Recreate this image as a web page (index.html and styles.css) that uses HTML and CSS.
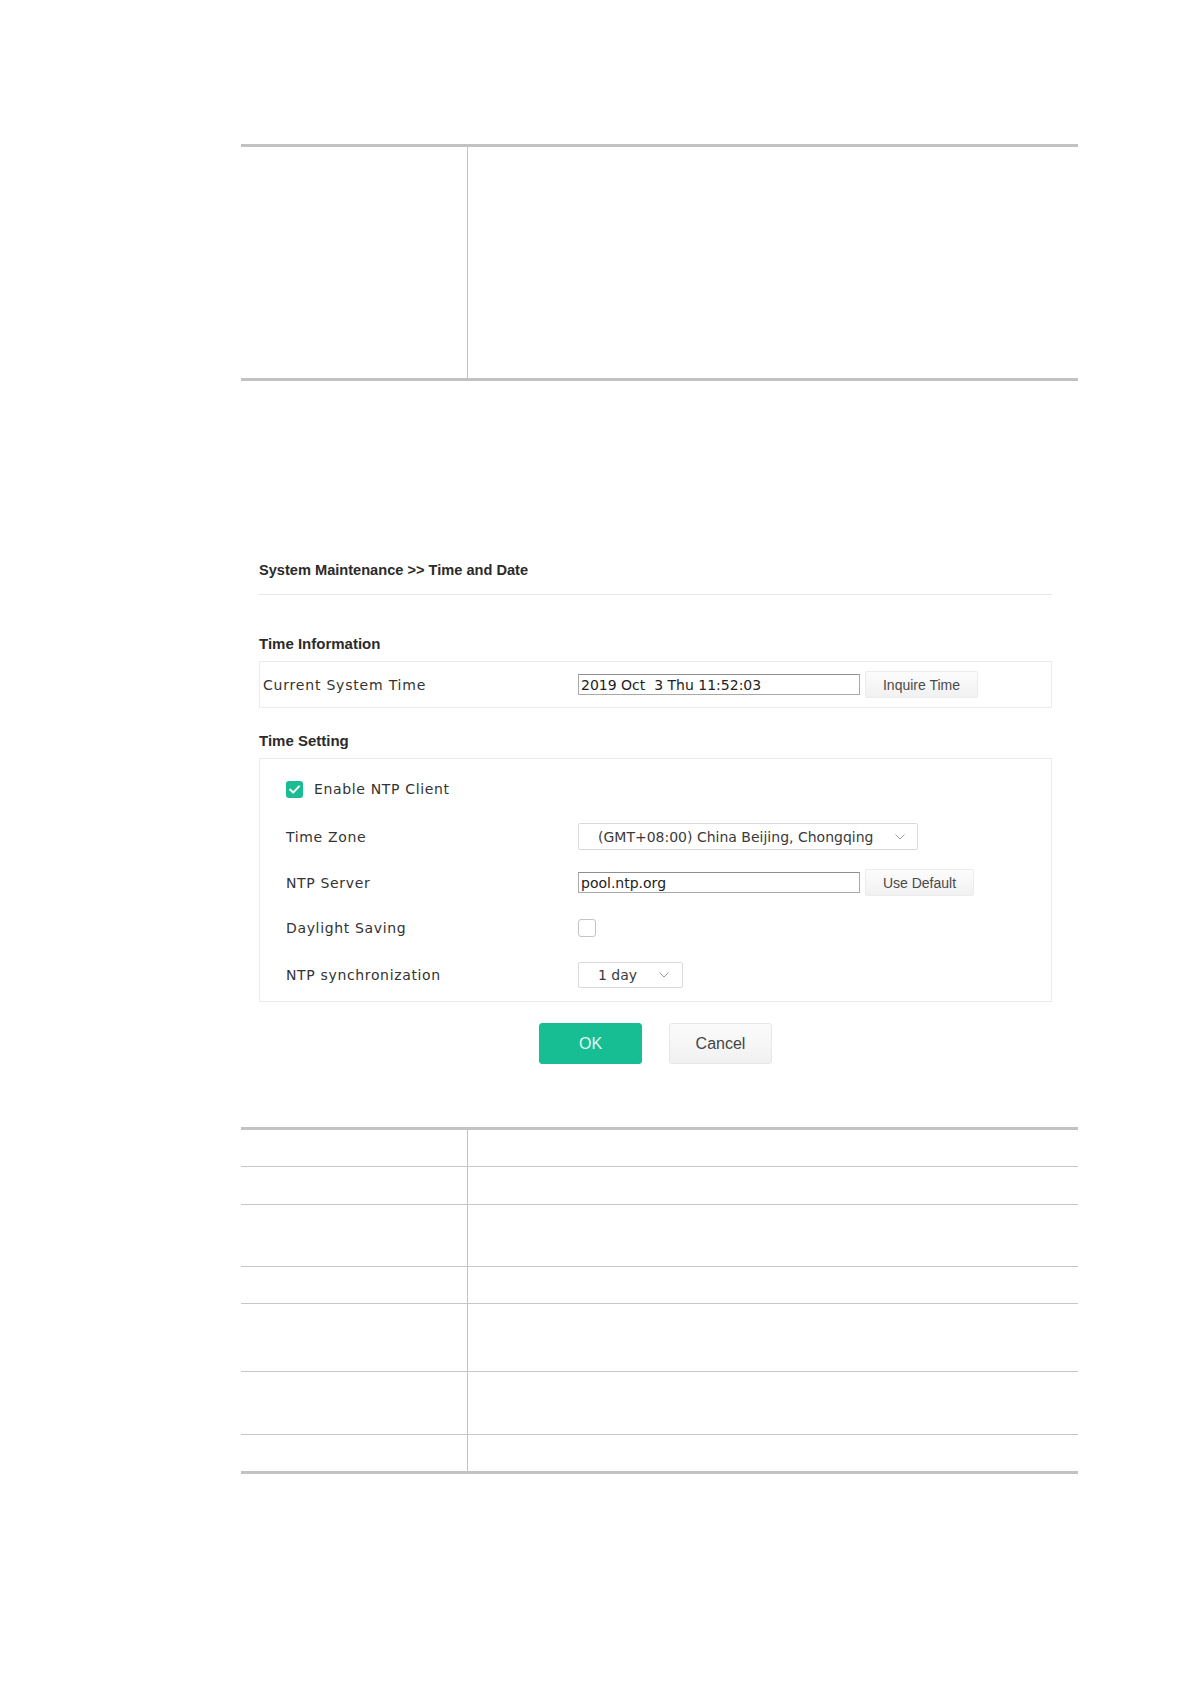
FILE: index.html
```html
<!DOCTYPE html>
<html lang="en">
<head>
<meta charset="utf-8">
<title>Time and Date</title>
<link rel="stylesheet" href="styles.css">
</head>
<body>
<div class="page">
  <div class="doc-table">
    <div class="doc-row h-top"><div class="c1"></div><div class="c2"></div></div>
  </div>

  <div class="panel">
    <div class="crumb">System Maintenance &gt;&gt; Time and Date</div>

    <div class="sec-title first">Time Information</div>
    <div class="box box-info">
      <span class="lbl lbl-info">Current System Time</span>
      <input class="txt" type="text" value="2019 Oct  3 Thu 11:52:03">
      <button class="btn-sm btn-inquire" type="button">Inquire Time</button>
    </div>

    <div class="sec-title">Time Setting</div>
    <div class="box box-set">
      <div class="set-row r1">
        <span class="chk on"><svg viewBox="0 0 17 17" width="17" height="17"><path d="M4 8.6 L7.2 11.6 L13 5.4" fill="none" stroke="#fff" stroke-width="2" stroke-linecap="round" stroke-linejoin="round"/></svg></span>
        <span class="lbl">Enable NTP Client</span>
      </div>
      <div class="set-row r2">
        <span class="lbl lbl-set">Time Zone</span>
        <div class="sel sel-tz"><span>(GMT+08:00) China Beijing, Chongqing</span><svg class="chev" viewBox="0 0 10 6" width="10" height="6"><polyline points="0.5,0.5 5,5 9.5,0.5" fill="none" stroke="#9a9a9a" stroke-width="1"/></svg></div>
      </div>
      <div class="set-row r3">
        <span class="lbl lbl-set">NTP Server</span>
        <input class="txt" type="text" value="pool.ntp.org">
        <button class="btn-sm btn-default" type="button">Use Default</button>
      </div>
      <div class="set-row r4">
        <span class="lbl lbl-set">Daylight Saving</span>
        <span class="chk off"></span>
      </div>
      <div class="set-row r5">
        <span class="lbl lbl-set">NTP synchronization</span>
        <div class="sel sel-day"><span>1 day</span><svg class="chev" viewBox="0 0 10 6" width="10" height="6"><polyline points="0.5,0.5 5,5 9.5,0.5" fill="none" stroke="#9a9a9a" stroke-width="1"/></svg></div>
      </div>
    </div>

    <div class="actions">
      <button class="btn btn-ok" type="button">OK</button>
      <button class="btn btn-cancel" type="button">Cancel</button>
    </div>
  </div>

  <div class="doc-table bottom">
    <div class="doc-row h36"><div class="c1"></div><div class="c2"></div></div>
    <div class="doc-row h38"><div class="c1"></div><div class="c2"></div></div>
    <div class="doc-row h62"><div class="c1"></div><div class="c2"></div></div>
    <div class="doc-row h37"><div class="c1"></div><div class="c2"></div></div>
    <div class="doc-row h68"><div class="c1"></div><div class="c2"></div></div>
    <div class="doc-row h63"><div class="c1"></div><div class="c2"></div></div>
    <div class="doc-row h37"><div class="c1"></div><div class="c2"></div></div>
  </div>
</div>
</body>
</html>
```

FILE: styles.css
```css
* { box-sizing: border-box; }

html, body {
  margin: 0;
  background: #ffffff;
}

body {
  font-family: "Liberation Sans", Arial, sans-serif;
  color: #333;
}

.page {
  width: 1190px;
  padding: 144px 0 40px 241px;
}

/* document tables */
.doc-table {
  width: 837px;
  border-top: 3px solid #c2c2c2;
  border-bottom: 3px solid #c2c2c2;
}

.doc-table.bottom {
  margin-top: 63px;
}

.doc-row {
  display: grid;
  grid-template-columns: 226px 1fr;
  border-top: 1px solid #c6c6c6;
}

.doc-row:first-child { border-top: 0; }

.doc-row .c2 { border-left: 1px solid #c2c2c2; }

.h-top { height: 231px; }
.h36 { height: 36px; }
.h37 { height: 37px; }
.h38 { height: 38px; }
.h62 { height: 62px; }
.h63 { height: 63px; }
.h68 { height: 68px; }

/* UI panel */
.panel {
  width: 793px;
  margin: 181px 0 0 18px;
}

.crumb {
  font-weight: bold;
  font-size: 14.6px;
  line-height: 17px;
  color: #2b2b2b;
  padding-bottom: 15px;
  border-bottom: 1px solid #e6e6e6;
}

.sec-title {
  font-weight: bold;
  font-size: 15px;
  line-height: 17px;
  color: #2b2b2b;
  margin-top: 24px;
  margin-bottom: 9px;
}

.sec-title.first { margin-top: 40px; }

.box {
  border: 1px solid #ebebeb;
  background: #fff;
}

.lbl {
  font-family: "DejaVu Sans", Verdana, sans-serif;
  font-size: 14px;
  letter-spacing: 0.65px;
  color: #333;
  white-space: nowrap;
}

.box-info {
  height: 47px;
  display: flex;
  align-items: center;
  padding-left: 3px;
}

.lbl-info { width: 315px; flex: none; letter-spacing: 0.8px; }
.lbl-set { width: 292px; flex: none; }

.txt {
  width: 282px;
  height: 21px;
  margin: 0;
  padding: 0 2px;
  border: 1px solid #a9a9a9;
  border-top-color: #8f8f8f;
  border-radius: 0;
  font-family: "DejaVu Sans", Verdana, sans-serif;
  font-size: 14px;
  color: #222;
  background: #fff;
  outline: none;
}

.btn-sm {
  height: 27px;
  margin: 0 0 0 5px;
  padding: 0;
  border: 1px solid #ececec;
  border-radius: 2px;
  background: linear-gradient(#fcfcfc, #f1f1f1);
  font-family: "Liberation Sans", Arial, sans-serif;
  font-size: 14px;
  color: #4a4a4a;
}

.btn-inquire { width: 113px; }
.btn-default { width: 109px; }

.box-set {
  height: 244px;
  padding: 7px 0 0 26px;
}

.set-row {
  display: flex;
  align-items: center;
  height: 46px;
}

.set-row.r2 { height: 49px; }
.set-row.r3 { height: 43px; }
.set-row.r4 { height: 48px; }

.chk {
  width: 17px;
  height: 17px;
  flex: none;
  border-radius: 3px;
  display: block;
}

.chk svg { display: block; }

.chk.on {
  background: #19bc93;
  margin-right: 11px;
}

.chk.off {
  width: 18px;
  height: 18px;
  border: 1px solid #c4c4c4;
  background: #fff;
}

.sel {
  display: flex;
  align-items: center;
  justify-content: space-between;
  height: 27px;
  border: 1px solid #dadada;
  border-radius: 2px;
  padding-left: 19px;
  font-family: "DejaVu Sans", Verdana, sans-serif;
  font-size: 14px;
  color: #3a3a3a;
  white-space: nowrap;
}

.sel-tz { width: 340px; padding-right: 12px; }
.sel-day { width: 105px; padding-right: 13px; height: 26px; }

.chev { display: block; }

.actions {
  display: flex;
  justify-content: center;
  gap: 27px;
  margin-top: 21px;
}

.btn {
  width: 103px;
  height: 41px;
  margin: 0;
  padding: 0;
  border-radius: 3px;
  font-family: "Liberation Sans", Arial, sans-serif;
  font-size: 16px;
}

.btn-ok {
  background: #17bd93;
  border: 1px solid #17bd93;
  color: #e4fbf4;
}

.btn-cancel {
  background: linear-gradient(#fbfbfb, #f1f1f1);
  border: 1px solid #e6e6e6;
  color: #444;
}
```
